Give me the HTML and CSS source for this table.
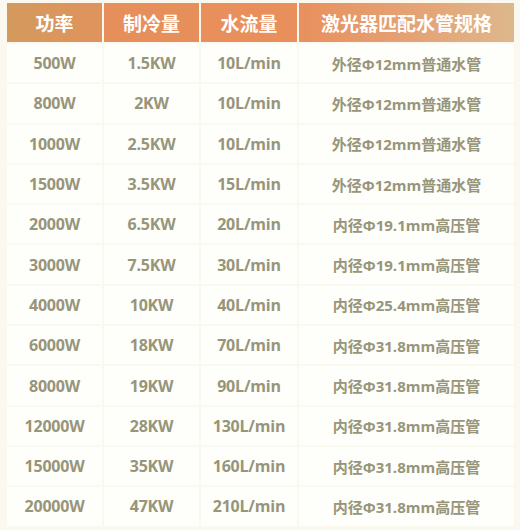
FILE: index.html
```html
<!DOCTYPE html>
<html lang="zh">
<head>
<meta charset="utf-8">
<link rel="stylesheet" href="styles.css">
</head>
<body>
<div class="table">
  <div class="row head">
    <div class="cell h1">功率</div>
    <div class="cell h2">制冷量</div>
    <div class="cell h3">水流量</div>
    <div class="cell h4">激光器匹配水管规格</div>
  </div>
  <div class="row"><div class="cell">500W</div><div class="cell">1.5KW</div><div class="cell">10L/min</div><div class="cell spec">外径Φ12mm普通水管</div></div>
  <div class="row"><div class="cell">800W</div><div class="cell">2KW</div><div class="cell">10L/min</div><div class="cell spec">外径Φ12mm普通水管</div></div>
  <div class="row"><div class="cell">1000W</div><div class="cell">2.5KW</div><div class="cell">10L/min</div><div class="cell spec">外径Φ12mm普通水管</div></div>
  <div class="row"><div class="cell">1500W</div><div class="cell">3.5KW</div><div class="cell">15L/min</div><div class="cell spec">外径Φ12mm普通水管</div></div>
  <div class="row"><div class="cell">2000W</div><div class="cell">6.5KW</div><div class="cell">20L/min</div><div class="cell spec">内径Φ19.1mm高压管</div></div>
  <div class="row"><div class="cell">3000W</div><div class="cell">7.5KW</div><div class="cell">30L/min</div><div class="cell spec">内径Φ19.1mm高压管</div></div>
  <div class="row"><div class="cell">4000W</div><div class="cell">10KW</div><div class="cell">40L/min</div><div class="cell spec">内径Φ25.4mm高压管</div></div>
  <div class="row"><div class="cell">6000W</div><div class="cell">18KW</div><div class="cell">70L/min</div><div class="cell spec">内径Φ31.8mm高压管</div></div>
  <div class="row"><div class="cell">8000W</div><div class="cell">19KW</div><div class="cell">90L/min</div><div class="cell spec">内径Φ31.8mm高压管</div></div>
  <div class="row"><div class="cell">12000W</div><div class="cell">28KW</div><div class="cell">130L/min</div><div class="cell spec">内径Φ31.8mm高压管</div></div>
  <div class="row"><div class="cell">15000W</div><div class="cell">35KW</div><div class="cell">160L/min</div><div class="cell spec">内径Φ31.8mm高压管</div></div>
  <div class="row"><div class="cell">20000W</div><div class="cell">47KW</div><div class="cell">210L/min</div><div class="cell spec">内径Φ31.8mm高压管</div></div>
</div>
</body>
</html>
```
FILE: styles.css
```css
html, body {
  margin: 0;
  padding: 0;
  background: #fbf9ef;
}
body {
  width: 520px;
  height: 530px;
  overflow: hidden;
  font-family: "Open Sans", "Noto Sans CJK SC", sans-serif;
}
.table {
  padding: 3px 6px 0 7px;
  display: flex;
  flex-direction: column;
  gap: 2px;
}
.row {
  display: grid;
  grid-template-columns: 95px 95px 96px 1fr;
  column-gap: 2px;
  height: 38.3px;
}
.row.head {
  height: 39px;
}
.cell {
  background: #fefefb;
  display: flex;
  align-items: center;
  justify-content: center;
  color: #97957a;
  font-weight: 700;
  font-size: 16px;
  letter-spacing: -0.2px;
  white-space: nowrap;
}
.cell.spec {
  font-size: 15px;
  letter-spacing: 0;
}
.head .cell {
  color: #ffffff;
  font-size: 19px;
  letter-spacing: 0;
  font-family: "Noto Sans CJK SC", sans-serif;
}
.h1 { background: linear-gradient(90deg, #d49a5d, #e0935c); }
.h2 { background: #e78f5b; }
.h3 { background: #e88f5c; }
.h4 { background: linear-gradient(90deg, #e8905e, #e4a578 60%, #ddb88c); }
```
